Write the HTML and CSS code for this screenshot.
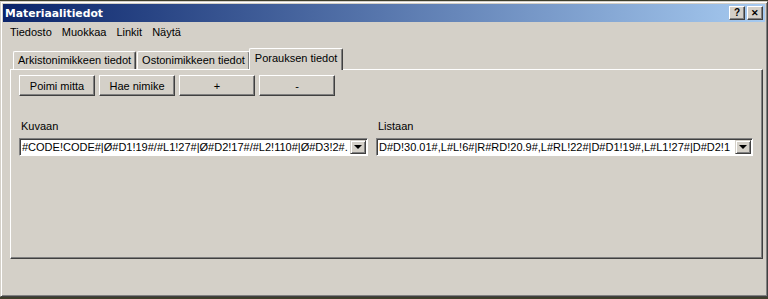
FILE: index.html
```html
<!DOCTYPE html>
<html lang="fi">

<head>
    <meta charset="UTF-8">
    <title>Materiaalitiedot</title>
    <link rel="stylesheet" href="styles.css">
</head>

<body>
    <div class="window">
        <!-- Otsikkopalkki -->
        <div class="titlebar">
            <span class="title">Materiaalitiedot</span>
            <div class="title-buttons">
                <span class="tbtn">?</span>
                <span class="tbtn close">&#x2715;</span>
            </div>
        </div>

        <!-- Valikko -->
        <div class="menubar">
            <span>Tiedosto</span>
            <span>Muokkaa</span>
            <span>Linkit</span>
            <span>Näytä</span>
        </div>

        <div class="content">
            <div class="tabs">
                <div class="tab">Arkistonimikkeen tiedot</div>
                <div class="tab">Ostonimikkeen tiedot</div>
                <div class="tab active">Porauksen tiedot</div>
            </div>

            <div class="panel">
                <div class="toolbar">
                    <button class="btn">Poimi mitta</button>
                    <button class="btn">Hae nimike</button>
                    <button class="btn">+</button>
                    <button class="btn">-</button>
                </div>

                <div class="fields">
                    <div class="field">
                        <label>Kuvaan</label>
                        <div class="combo">
                            <span class="combo-text">#CODE!CODE#|Ø#D1!19#/#L1!27#|Ø#D2!17#/#L2!110#|Ø#D3!2#.</span>
                            <span class="combo-arrow"></span>
                        </div>
                    </div>
                    <div class="field">
                        <label>Listaan</label>
                        <div class="combo">
                            <span class="combo-text">D#D!30.01#,L#L!6#|R#RD!20.9#,L#RL!22#|D#D1!19#,L#L1!27#|D#D2!1</span>
                            <span class="combo-arrow"></span>
                        </div>
                    </div>
                </div>
            </div>
        </div>
    </div>
</body>

</html>
```

FILE: styles.css
```css
/* Yleiset */
body {
    margin: 0;
    padding-top: 1px;
    background-color: #3e3e2c;
    font-family: 'Liberation Sans', Arial, sans-serif;
    font-size: 11px;
    color: #000;
}

.window {
    height: 296px;
    background-color: #d4d0c8;
    border: 1px solid;
    border-color: #d4d0c8 #404040 #404040 #d4d0c8;
    box-shadow: inset 1px 1px #fff, inset -1px -1px #808080;
    padding: 2px;
    box-sizing: border-box;
    display: flex;
    flex-direction: column;
}

/* Otsikkopalkki */
.titlebar {
    height: 18px;
    background: linear-gradient(to right, #0a246a, #a6caf0);
    display: flex;
    align-items: center;
    justify-content: space-between;
    padding: 0 2px 0 2px;
}

.title {
    color: #fff;
    font-family: 'DejaVu Sans', sans-serif;
    font-weight: bold;
    font-size: 10.8px;
    padding-top: 1px;
}

.title-buttons {
    display: flex;
    gap: 2px;
}

.tbtn {
    width: 16px;
    height: 14px;
    box-sizing: border-box;
    background-color: #d4d0c8;
    border: 1px solid;
    border-color: #fff #404040 #404040 #fff;
    box-shadow: inset -1px -1px #808080;
    font-weight: bold;
    font-size: 10px;
    line-height: 12px;
    text-align: center;
}

.close {
    font-size: 9px;
}

/* Valikko */
.menubar {
    display: flex;
    gap: 10px;
    padding: 2px 0 0 7px;
    height: 18px;
    line-height: 17px;
}

/* Välilehdet */
.content {
    padding: 5px 2px 0 7px;
}

.tabs {
    display: flex;
    align-items: flex-end;
    padding-left: 3px;
    height: 22px;
    position: relative;
    z-index: 1;
}

.tab {
    height: 18px;
    line-height: 17px;
    padding: 0 4px;
    border: 1px solid;
    border-color: #fff #404040 transparent #fff;
    border-bottom: none;
    border-radius: 2px 2px 0 0;
    box-shadow: inset -1px 0 #808080;
    box-sizing: border-box;
    margin-right: 1px;
}

.tab.active {
    height: 22px;
    line-height: 19px;
    padding: 0 5px;
    margin-left: -2px;
    margin-bottom: -1px;
    background-color: #d4d0c8;
}

.panel {
    height: 190px;
    box-sizing: border-box;
    border: 1px solid;
    border-color: #fff #404040 #404040 #fff;
    box-shadow: inset -1px -1px #808080;
    padding: 5px 8px;
}

.toolbar {
    display: flex;
    gap: 4px;
}

.btn {
    width: 76px;
    height: 21px;
    font-family: inherit;
    font-size: 11px;
    background-color: #d4d0c8;
    border: 1px solid;
    border-color: #fff #404040 #404040 #fff;
    box-shadow: inset -1px -1px #808080;
    padding: 0;
}

/* Kentät */
.fields {
    display: grid;
    grid-template-columns: 349px 377px;
    gap: 8px;
    margin-top: 24px;
}

.field label {
    display: block;
    padding-left: 2px;
    height: 18px;
}

.combo {
    height: 18px;
    box-sizing: border-box;
    background-color: #fff;
    border: 1px solid;
    border-color: #808080 #fff #fff #808080;
    box-shadow: inset 1px 1px #404040;
    display: flex;
    align-items: center;
    padding: 1px 1px 1px 2px;
}

.combo-text {
    flex: 1;
    white-space: nowrap;
    overflow: hidden;
    line-height: 14px;
}

.combo-arrow {
    width: 16px;
    height: 14px;
    box-sizing: border-box;
    background-color: #d4d0c8;
    border: 1px solid;
    border-color: #d4d0c8 #404040 #404040 #d4d0c8;
    box-shadow: inset 1px 1px #fff, inset -1px -1px #808080;
    position: relative;
}

.combo-arrow::after {
    content: "";
    position: absolute;
    left: 3px;
    top: 4px;
    border-left: 4px solid transparent;
    border-right: 4px solid transparent;
    border-top: 4px solid #000;
}
```
